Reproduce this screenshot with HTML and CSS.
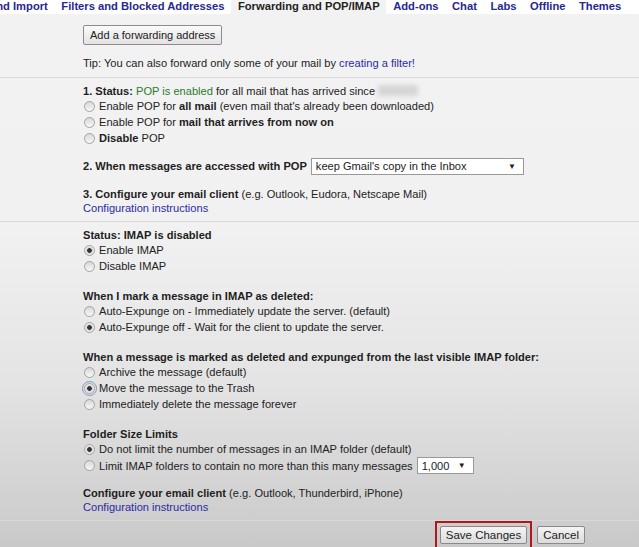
FILE: index.html
```html
<!DOCTYPE html>
<html lang="en">
<head>
    <meta charset="UTF-8">
    <meta name="viewport" content="width=device-width, initial-scale=1.0">
    <title>Settings - Forwarding and POP/IMAP</title>
    <link rel="stylesheet" href="styles.css">
</head>
<body>

    <nav class="tabs">
        <a class="tab">Accounts and Import</a>
        <a class="tab">Filters and Blocked Addresses</a>
        <a class="tab current">Forwarding and POP/IMAP</a>
        <a class="tab">Add-ons</a>
        <a class="tab">Chat</a>
        <a class="tab">Labs</a>
        <a class="tab">Offline</a>
        <a class="tab">Themes</a>
    </nav>

    <section class="block forward">
        <button class="btn">Add a forwarding address</button>
        <p class="tip">Tip: You can also forward only some of your mail by <a class="link">creating a filter!</a></p>
    </section>

    <hr class="rule">

    <!-- POP settings -->
    <section class="block pop">
        <p class="head"><b>1. Status:</b> <span class="ok">POP is enabled</span> for all mail that has arrived since <span class="blur"></span></p>
        <label class="opt"><input type="radio" name="pop"> Enable POP for&nbsp;<b>all mail</b>&nbsp;(even mail that's already been downloaded)</label>
        <label class="opt"><input type="radio" name="pop"> Enable POP for&nbsp;<b>mail that arrives from now on</b></label>
        <label class="opt"><input type="radio" name="pop"> <b>Disable</b>&nbsp;POP</label>

        <div class="row when">
            <b>2. When messages are accessed with POP</b>
            <span class="select wide">keep Gmail's copy in the Inbox<i>&#9660;</i></span>
        </div>

        <p class="head client"><b>3. Configure your email client</b> (e.g. Outlook, Eudora, Netscape Mail)</p>
        <a class="link small">Configuration instructions</a>
    </section>

    <hr class="rule">

    <!-- IMAP settings -->
    <section class="block imap">
        <div class="group first">
            <p class="head"><b>Status: IMAP is disabled</b></p>
            <label class="opt"><input type="radio" name="imap" checked> Enable IMAP</label>
            <label class="opt"><input type="radio" name="imap"> Disable IMAP</label>
        </div>

        <div class="group">
            <p class="head"><b>When I mark a message in IMAP as deleted:</b></p>
            <label class="opt"><input type="radio" name="expunge"> Auto-Expunge on - Immediately update the server. (default)</label>
            <label class="opt"><input type="radio" name="expunge" checked> Auto-Expunge off - Wait for the client to update the server.</label>
        </div>

        <div class="group">
            <p class="head"><b>When a message is marked as deleted and expunged from the last visible IMAP folder:</b></p>
            <label class="opt"><input type="radio" name="deleted"> Archive the message (default)</label>
            <label class="opt"><input type="radio" name="deleted" class="focused" checked> Move the message to the Trash</label>
            <label class="opt"><input type="radio" name="deleted"> Immediately delete the message forever</label>
        </div>

        <div class="group">
            <p class="head"><b>Folder Size Limits</b></p>
            <label class="opt"><input type="radio" name="limit" checked> Do not limit the number of messages in an IMAP folder (default)</label>
            <label class="opt tall"><input type="radio" name="limit"> Limit IMAP folders to contain no more than this many messages <span class="select short">1,000<i>&#9660;</i></span></label>
        </div>

        <p class="head client"><b>Configure your email client</b> (e.g. Outlook, Thunderbird, iPhone)</p>
        <a class="link small">Configuration instructions</a>
    </section>

    <hr class="rule">

    <footer class="actions">
        <span class="highlight"><button class="btn action">Save Changes</button></span>
        <button class="btn action">Cancel</button>
    </footer>

</body>
</html>
```

FILE: styles.css
```css
html {
    min-height: 100%;
    background: linear-gradient(#f2f2f2 0, #f1f1f1 230px, #e4e4e4 380px, #d6d6d6 470px, #c9c9c9 547px);
}
body {
    margin: 0;
    font-family: "Liberation Sans", Arial, sans-serif;
    font-size: 11.1px;
    color: #222;
    overflow: hidden;
}
p {
    margin: 0;
}
b {
    color: #1e1e1e;
}
.tabs {
    display: flex;
    justify-content: flex-end;
    height: 14px;
    line-height: 12px;
    padding-right: 11px;
    background: #fff;
    font-size: 11.2px;
    font-weight: bold;
    white-space: nowrap;
    overflow: hidden;
}
.tab {
    flex-shrink: 0;
    padding: 0 6.75px;
    color: #272790;
    cursor: pointer;
}
.tab.current {
    background: #f2f2f2;
    color: #222;
}
.block {
    padding-left: 83px;
}
.rule {
    margin: 6px 0 0;
    border: 0;
    border-top: 1px solid #d9d9d9;
}
.forward {
    padding-top: 11px;
}
.btn {
    height: 20px;
    padding: 0 6px;
    font-family: inherit;
    font-size: 11px;
    color: #222;
    border: 1px solid #8c8c8c;
    border-radius: 2px;
    background: linear-gradient(#fbfbfb, #e2e2e2);
    cursor: pointer;
}
.tip {
    margin-top: 10px;
    line-height: 16px;
}
.link {
    color: #2b2ba3;
    cursor: pointer;
}
.link.small {
    display: block;
    line-height: 14px;
}
.pop, .imap {
    padding-top: 6px;
}
.head {
    line-height: 14px;
}
.ok {
    color: #2c7a2c;
}
.blur {
    display: inline-block;
    width: 40px;
    height: 11px;
    vertical-align: -1px;
    background: #d6d6d6;
    filter: blur(2px);
}
.opt {
    display: flex;
    align-items: center;
    height: 16px;
    white-space: nowrap;
}
.opt.tall {
    height: 17px;
}
.opt input {
    appearance: none;
    width: 11px;
    height: 11px;
    margin: 0 4px 0 1px;
    border: 1px solid #a3a3a3;
    border-radius: 50%;
    background: linear-gradient(#d8d8d8, #f7f7f7);
}
.opt input:checked {
    background: radial-gradient(circle, #333 0 2px, #d6d6d6 2.6px, #f3f3f3 5px);
}
.opt input.focused {
    outline: 1px solid #7b97cf;
    outline-offset: 1px;
}
.row {
    display: flex;
    align-items: center;
    height: 18px;
}
.when {
    margin-top: 11px;
}
.client {
    margin-top: 12px;
}
.select {
    display: inline-flex;
    align-items: center;
    justify-content: space-between;
    box-sizing: border-box;
    height: 17px;
    margin-left: 4px;
    padding: 0 7px 0 4px;
    border: 1px solid #999;
    background: #fff;
    color: #222;
}
.select i {
    font-style: normal;
    font-size: 8px;
}
.select.wide {
    width: 213px;
}
.select.short {
    width: 57px;
}
.group {
    margin-top: 15px;
}
.group.first {
    margin-top: 0;
}
.actions {
    display: flex;
    justify-content: flex-end;
    align-items: center;
    gap: 5px;
    padding-right: 54px;
}
.highlight {
    padding: 3px;
    border: 2px solid #b3151d;
}
.btn.action {
    display: block;
    height: 18px;
    padding: 0 5px;
    font-size: 11.5px;
    border-color: #8a8a8a;
    background: linear-gradient(#f4f4f4, #dcdcdc);
}
```
